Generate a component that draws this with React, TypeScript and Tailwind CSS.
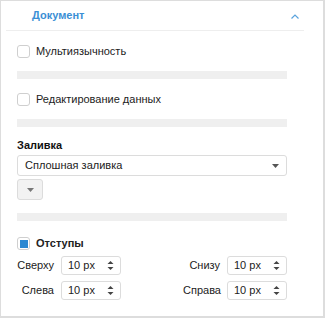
import React from "react";

const font = { fontFamily: '"Liberation Sans", Arial, sans-serif' };

const Check = ({ checked = false }: { checked?: boolean }) => (
  <span className="w-[13px] h-[13px] rounded-[3px] border border-[#cfcfcf] bg-white flex items-center justify-center shrink-0">
    {checked && <span className="w-[8px] h-[8px] bg-[#2a88d2]" />}
  </span>
);

const Spin = ({ label }: { label: string }) => (
  <div className="flex items-center">
    <span className="w-[37px] text-right text-[11px] text-[#222] mr-[7px]">{label}</span>
    <div className="w-[60px] h-[19px] border border-[#dcdcdc] rounded-[3px] bg-white flex items-center pl-[6px] pr-[6px] justify-between">
      <span className="text-[11px] text-[#222]">10 px</span>
      <svg width="7" height="11" viewBox="0 0 7 11">
        <path d="M3.5 1 L6.5 4 L0.5 4 Z" fill="#444" />
        <path d="M3.5 10 L6.5 7 L0.5 7 Z" fill="#444" />
      </svg>
    </div>
  </div>
);

const Bar = () => <div className="h-[8px] w-[270px] bg-[#efefef]" />;

export default function App() {
  return (
    <div style={font} className="w-[325px] h-[318px] bg-white border border-[#dddddd] border-r-2 border-b-2">
      <div className="mx-[5px] w-[298px] h-[30px] border-b border-[#eeeeee] flex items-center justify-between pl-[26px] pr-[5px]">
        <span className="text-[11px] font-bold text-[#3b8fd5]">Документ</span>
        <svg width="8" height="5" viewBox="0 0 8 5" className="mt-[2px]">
          <path d="M0.5 4.5 L4 1 L7.5 4.5" stroke="#5aa3dd" strokeWidth="1.2" fill="none" />
        </svg>
      </div>
      <div className="pl-[16px] w-[287px]">
        <label className="mt-[14px] flex items-center gap-[6px] h-[13px]">
          <Check />
          <span className="text-[11px] text-[#222]">Мультиязычность</span>
        </label>
        <div className="mt-[13px]"><Bar /></div>
        <label className="mt-[14px] flex items-center gap-[6px] h-[13px]">
          <Check />
          <span className="text-[11px] text-[#222]">Редактирование данных</span>
        </label>
        <div className="mt-[13px]"><Bar /></div>
        <div className="mt-[10px] h-[16px] leading-[16px] text-[11px] font-bold text-[#111]">Заливка</div>
        <div className="mt-[2px] w-[270px] h-[21px] border border-[#dcdcdc] rounded-[3px] flex items-center justify-between pl-[7px] pr-[7px]">
          <span className="text-[11px] text-[#222]">Сплошная заливка</span>
          <svg width="7" height="4" viewBox="0 0 7 4">
            <path d="M0 0 L7 0 L3.5 4 Z" fill="#555" />
          </svg>
        </div>
        <div className="mt-[3px] w-[26px] h-[21px] border border-[#dcdcdc] rounded-[3px] bg-[#f2f2f2] flex items-center justify-center">
          <svg width="7" height="4" viewBox="0 0 7 4">
            <path d="M0 0 L7 0 L3.5 4 Z" fill="#777" />
          </svg>
        </div>
        <div className="mt-[13px]"><Bar /></div>
        <label className="mt-[16px] flex items-center gap-[6px] h-[13px]">
          <Check checked />
          <span className="text-[11px] font-bold text-[#222]">Отступы</span>
        </label>
        <div className="mt-[6px] w-[270px] flex justify-between">
          <Spin label="Сверху" />
          <Spin label="Снизу" />
        </div>
        <div className="mt-[6px] w-[270px] flex justify-between">
          <Spin label="Слева" />
          <Spin label="Справа" />
        </div>
      </div>
    </div>
  );
}
